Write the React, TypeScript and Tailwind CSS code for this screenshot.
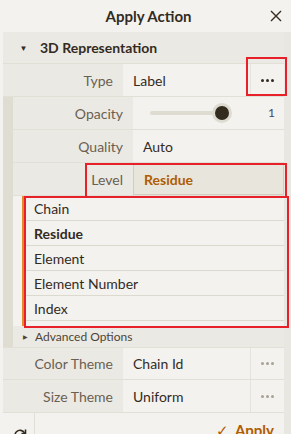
import React from 'react';

const Dots = ({ faint }: { faint?: boolean }) => (
  <span className={`flex gap-[2px] ${faint ? 'text-[#a8a194]' : 'text-[#332b1f]'}`}>
    <span className="w-[3px] h-[3px] rounded-full bg-current" />
    <span className="w-[3px] h-[3px] rounded-full bg-current" />
    <span className="w-[3px] h-[3px] rounded-full bg-current" />
  </span>
);

const Row = ({
  label,
  children,
  labelW = 'w-[120px]',
  className = '',
}: {
  label: string;
  children: React.ReactNode;
  labelW?: string;
  className?: string;
}) => (
  <div className={`flex h-[33px] border-b border-[#e2dfd7] ${className}`}>
    <div className={`${labelW} shrink-0 bg-[#ebe9e3] flex items-center justify-end pr-[10px] text-[#6a6052]`}>{label}</div>
    <div className="flex-1 flex items-center bg-[#f3f2ee]">{children}</div>
  </div>
);

const items = ['Chain', 'Residue', 'Element', 'Element Number', 'Index'];

export default function App() {
  return (
    <div
      className="relative w-[291px] h-[434px] overflow-hidden bg-[#f3f2ee] text-[#332b1f] text-[14px]"
      style={{ fontFamily: 'Lato, "Noto Sans", sans-serif' }}
    >
      {/* title */}
      <div className="relative h-[32px] flex items-center justify-center font-bold text-[15px]">
        <span className="ml-[6px]">Apply Action</span>
        <svg className="absolute right-[9px] top-[10px]" width="12" height="12" viewBox="0 0 12 12">
          <path d="M1 1 L11 11 M11 1 L1 11" stroke="#332b1f" strokeWidth="1.4" />
        </svg>
      </div>

      <div className="flex">
        <div className="w-[3px] shrink-0" />
        <div className="w-[281px] shrink-0">
          {/* section header */}
          <div className="h-[32px] flex items-center bg-[#ebe9e3] border-b border-[#e2dfd7] font-bold">
            <span className="w-[37px] flex justify-center text-[8px] pl-[4px]">▼</span>
            <span>3D Representation</span>
          </div>

          {/* Type */}
          <div className="flex h-[33px] border-b border-[#e2dfd7]">
            <div className="w-[120px] shrink-0 bg-[#ebe9e3] flex items-center justify-end pr-[10px] text-[#6a6052]">Type</div>
            <div className="flex-1 flex items-center pl-[10px] bg-[#f3f2ee]">Label</div>
            <div className="w-[34px] flex items-center justify-center bg-[#f3f2ee] border-l border-[#e6e3dc]">
              <Dots />
            </div>
          </div>

          {/* nested params */}
          <div className="flex">
            <div className="w-[10px] shrink-0 bg-[#dfdcd1]" />
            <div className="flex-1">
              <Row label="Opacity">
                <div className="flex-1 flex items-center pl-[17px] pr-[9px]">
                  <div className="relative w-[80px] h-[4px] rounded-full bg-[#dedbd1]">
                    <div className="absolute -right-[2px] -top-[8px] w-[20px] h-[20px] rounded-full bg-[#dedbd1] flex items-center justify-center">
                      <div className="w-[14px] h-[14px] rounded-full bg-[#332b1f]" />
                    </div>
                  </div>
                  <span className="ml-auto text-[12px] text-[#4b3f70]">1</span>
                </div>
              </Row>
              <Row label="Quality">
                <span className="pl-[10px]">Auto</span>
              </Row>
              <Row label="Level">
                <div className="h-full flex-1 flex items-center pl-[10px] bg-[#e8e5dd] border border-[#d3cdbf] font-bold text-[#ae5d04]">
                  Residue
                </div>
              </Row>

              {/* options list */}
              <div className="flex">
                <div className="w-[9px] shrink-0" />
                <div className="flex-1 border-l-[2px] border-[#e38b2c] pb-[5px]">
                  {items.map((it) => (
                    <div
                      key={it}
                      className={`h-[25px] flex items-center pl-[10px] border-b border-[#dcd9cf] ${it === 'Residue' ? 'font-bold' : ''}`}
                    >
                      {it}
                    </div>
                  ))}
                </div>
              </div>

              {/* advanced */}
              <div className="h-[21px] flex items-center bg-[#ebe9e3] text-[12px] text-[#4e4437]">
                <span className="w-[22px] flex justify-center text-[6px] pl-[2px]">▶</span>
                <span>Advanced Options</span>
              </div>
            </div>
          </div>

          {/* Color theme */}
          <div className="flex h-[33px] border-b border-[#e2dfd7] border-t">
            <div className="w-[120px] shrink-0 bg-[#ebe9e3] flex items-center justify-end pr-[10px] text-[#6a6052]">Color Theme</div>
            <div className="flex-1 flex items-center pl-[10px]">Chain Id</div>
            <div className="w-[34px] flex items-center justify-center border-l border-[#e6e3dc]">
              <Dots faint />
            </div>
          </div>
          <div className="flex h-[33px] border-b border-[#e2dfd7]">
            <div className="w-[120px] shrink-0 bg-[#ebe9e3] flex items-center justify-end pr-[10px] text-[#6a6052]">Size Theme</div>
            <div className="flex-1 flex items-center pl-[10px]">Uniform</div>
            <div className="w-[34px] flex items-center justify-center border-l border-[#e6e3dc]">
              <Dots faint />
            </div>
          </div>

          {/* footer */}
          <div className="flex h-[32px]">
            <div className="w-[32px] shrink-0 flex items-center justify-center border-r border-[#e2dfd7]">
              <svg width="14" height="14" viewBox="0 0 14 14" className="mt-[12px] ml-[2px]">
                <path d="M11.5 5 A5 5 0 1 0 12 8" fill="none" stroke="#332b1f" strokeWidth="1.6" />
                <path d="M12.5 1.5 L12.5 5.5 L8.5 5.5" fill="none" stroke="#332b1f" strokeWidth="1.6" />
              </svg>
            </div>
            <div className="flex-1 flex items-center justify-end pr-[10px] pt-[2px] font-bold text-[15px] text-[#ae5d04]">
              <span className="mr-[6px] font-normal text-[#ae5d04]">✓</span>
              Apply
            </div>
          </div>
        </div>
        <div className="flex-1 bg-[#e9e7e1]" />
      </div>

      {/* annotation boxes */}
      <div className="absolute left-[246px] top-[57px] w-[41px] h-[39px] border-2 border-[#e8202a]" />
      <div className="absolute left-[85px] top-[163px] w-[202px] h-[35px] border-2 border-[#e8202a]" />
      <div className="absolute left-[24px] top-[196px] w-[265px] h-[132px] border-2 border-[#e8202a]" />
    </div>
  );
}
